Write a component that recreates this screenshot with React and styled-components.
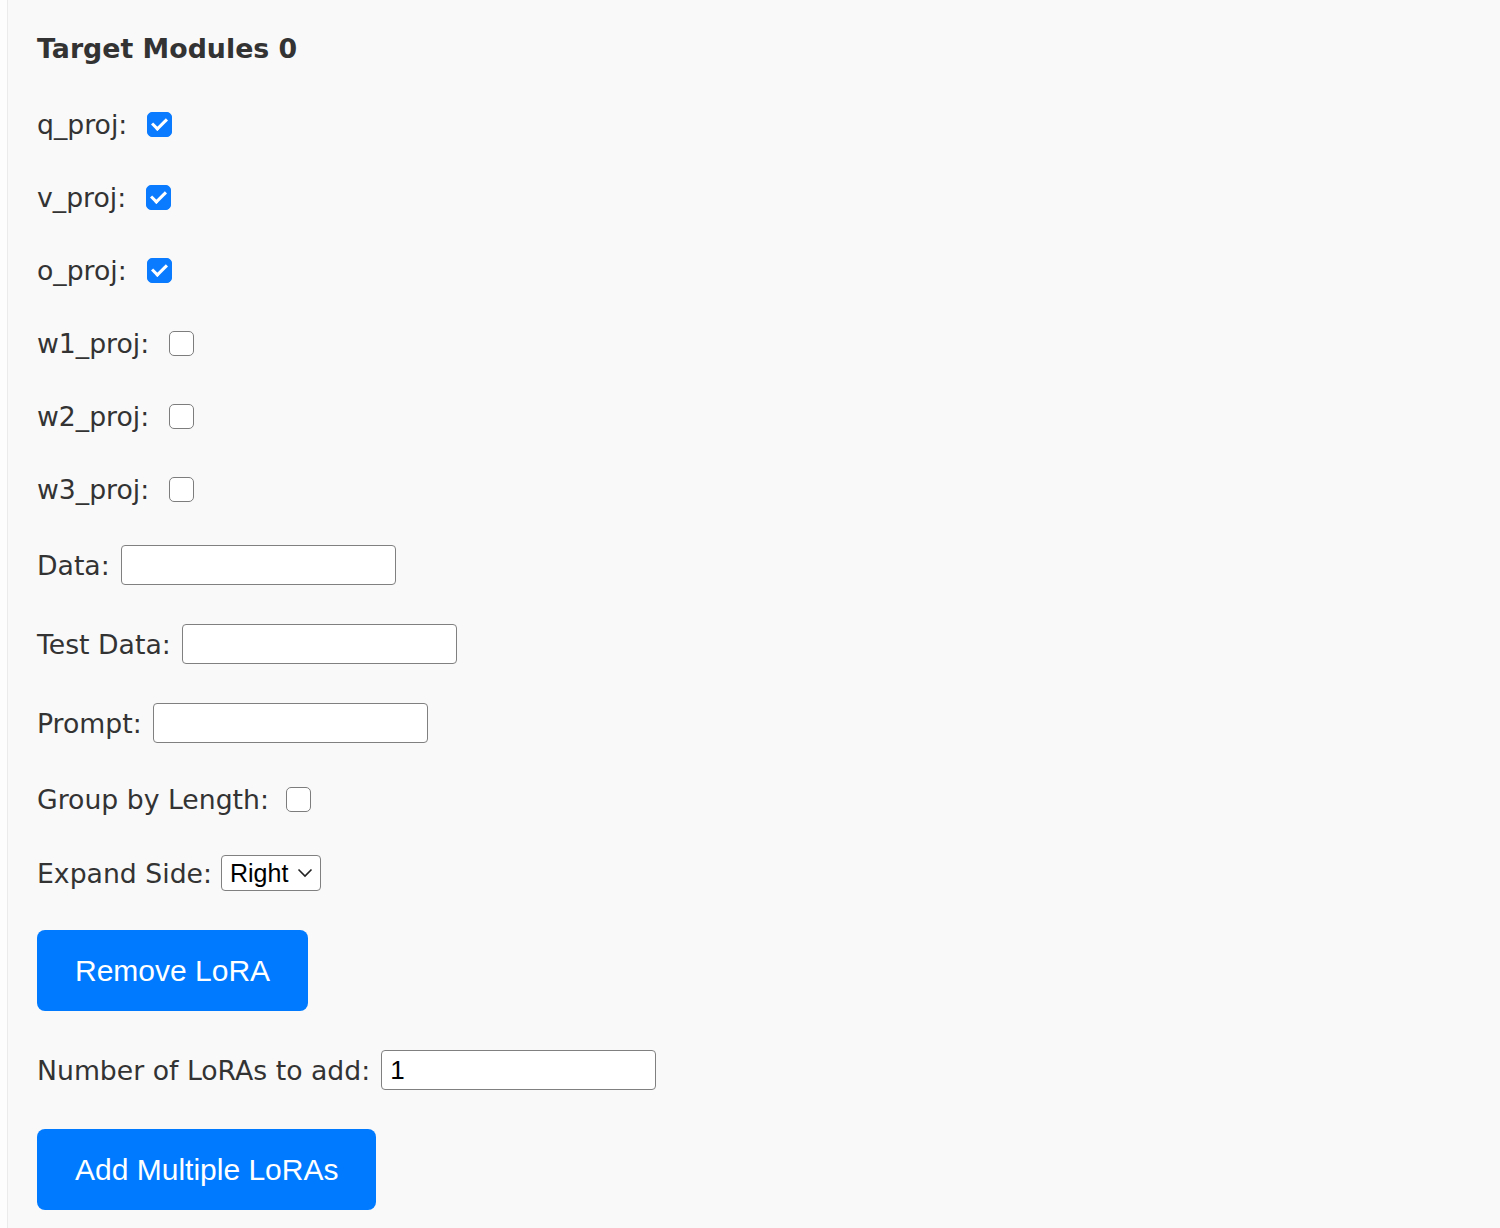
import React, { useState } from 'react'
import styled, { createGlobalStyle } from 'styled-components'

const GlobalStyle = createGlobalStyle`
  body {
    margin: 0;
    background: #fdfdfd;
    font-family: "DejaVu Sans", Verdana, sans-serif;
  }
`

const Panel = styled.div`
  margin-left: 7px;
  border-left: 1px solid #ebebeb;
  background: #f9f9f9;
  min-height: 100vh;
  padding: 32px 0 0 29px;
  box-sizing: border-box;
`

const Title = styled.h2`
  margin: 0 0 41px;
  font-size: 26.8px;
  line-height: 34px;
  font-weight: bold;
  color: #333;
`

const Form = styled.div`
  display: flex;
  flex-direction: column;
  gap: 39px;
`

const Row = styled.div`
  display: flex;
  align-items: center;
  height: ${p => p.h || 34}px;
  gap: ${p => p.gap || 11}px;
`

const Label = styled.label`
  font-size: 26.7px;
  color: #333;
  white-space: nowrap;
`

const Check = styled.input.attrs({ type: 'checkbox' })`
  appearance: none;
  margin: 0;
  width: 25px;
  height: 25px;
  box-sizing: border-box;
  border-radius: 5px;
  border: 1.5px solid #7d7d7d;
  background: #fff;
  display: grid;
  place-items: center;
  &:checked {
    border-color: #0a7bff;
    background: #0a7bff;
  }
  &:checked::after {
    content: '';
    width: 6px;
    height: 12px;
    border: solid #fff;
    border-width: 0 3.5px 3.5px 0;
    transform: translate(0, -2px) rotate(45deg);
  }
`

const TextInput = styled.input`
  width: 275px;
  height: 40px;
  box-sizing: border-box;
  border: 1.5px solid #808080;
  border-radius: 4px;
  background: #fff;
  padding: 0 8px;
  font-family: "Liberation Sans", Arial, sans-serif;
  font-size: 26px;
  color: #000;
  outline: none;
`

const SelectWrap = styled.div`
  position: relative;
  display: inline-flex;
`

const Select = styled.select`
  appearance: none;
  width: 100px;
  height: 36px;
  box-sizing: border-box;
  border: 1.5px solid #808080;
  border-radius: 4px;
  background: #fff;
  padding: 0 0 0 8px;
  font-family: "Liberation Sans", Arial, sans-serif;
  font-size: 25px;
  color: #000;
  outline: none;
`

const Chevron = styled.svg`
  position: absolute;
  right: 8px;
  top: 13px;
  pointer-events: none;
`

const Button = styled.button`
  align-self: flex-start;
  height: 81px;
  padding: 0 38px;
  border: none;
  border-radius: 8px;
  background: #007bff;
  color: #fff;
  font-family: "Liberation Sans", Arial, sans-serif;
  font-size: 30px;
  cursor: pointer;
`

const modules = [
  ['q_proj', true],
  ['v_proj', true],
  ['o_proj', true],
  ['w1_proj', false],
  ['w2_proj', false],
  ['w3_proj', false],
]

const App = () => {
  const [count, setCount] = useState('1')
  return (
    <>
      <GlobalStyle />
      <Panel>
        <Title>Target Modules 0</Title>
        <Form>
          {modules.map(([name, on]) => (
            <Row key={name} gap={20}>
              <Label>{name}:</Label>
              <Check defaultChecked={on} />
            </Row>
          ))}
          <Row h={40}>
            <Label>Data:</Label>
            <TextInput />
          </Row>
          <Row h={40}>
            <Label>Test Data:</Label>
            <TextInput />
          </Row>
          <Row h={40}>
            <Label>Prompt:</Label>
            <TextInput />
          </Row>
          <Row gap={17}>
            <Label>Group by Length:</Label>
            <Check />
          </Row>
          <Row h={36} gap={9}>
            <Label>Expand Side:</Label>
            <SelectWrap>
              <Select defaultValue="right">
                <option value="right">Right</option>
                <option value="left">Left</option>
              </Select>
              <Chevron width="16" height="10" viewBox="0 0 16 10">
                <path d="M1.5 1.5 L8 8 L14.5 1.5" fill="none" stroke="#222" strokeWidth="1.6" />
              </Chevron>
            </SelectWrap>
          </Row>
          <Button>Remove LoRA</Button>
          <Row h={40}>
            <Label>Number of LoRAs to add:</Label>
            <TextInput value={count} onChange={e => setCount(e.target.value)} />
          </Row>
          <Button>Add Multiple LoRAs</Button>
        </Form>
      </Panel>
    </>
  )
}

export default App
